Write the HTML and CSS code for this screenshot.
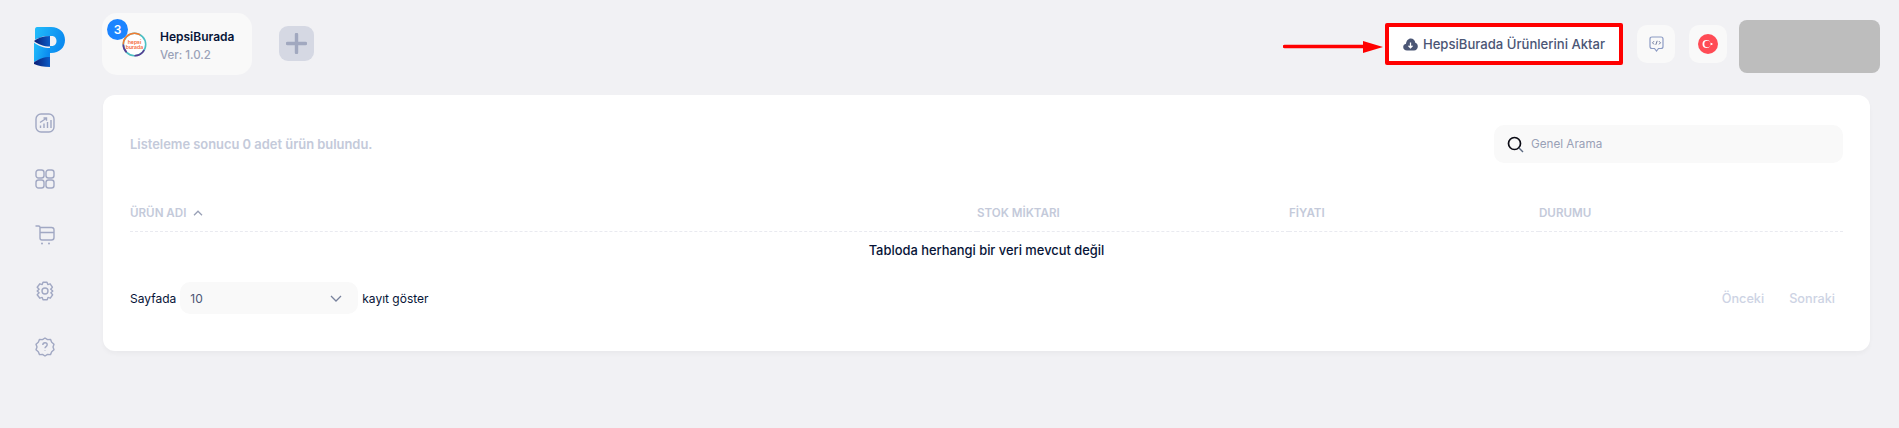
FILE: index.html
```html
<!DOCTYPE html>
<html lang="en">
<head>
  <meta charset="UTF-8">
  <meta name="viewport" content="width=device-width, initial-scale=1.0">
  <title>HepsiBurada Ürünleri</title>
  <link rel="stylesheet" href="styles.css">
</head>
<body>
  <div class="page">
    <!-- Sidebar -->
    <aside class="sidebar">
      <svg class="logo" width="31" height="40" viewBox="0 0 31 40">
        <defs>
          <linearGradient id="logoBlue" x1="0" y1="0" x2="1" y2="0.3">
            <stop offset="0" stop-color="#22bdfb"/>
            <stop offset="1" stop-color="#0b8bf0"/>
          </linearGradient>
          <linearGradient id="logoDark" x1="0" y1="0" x2="1" y2="0">
            <stop offset="0" stop-color="#0a1c74"/>
            <stop offset="1" stop-color="#0a5cc8"/>
          </linearGradient>
        </defs>
        <path d="M3 0H17C25.500 0 31 5.500 31 13C31 20.500 25.500 26 17 26H16V19H18C20.800 19 22.500 16.800 22.500 14C22.500 11.200 20.800 9 18 9H16C10 9 4 10.500 1 13V2.500C1 1 1.800 0 3 0Z" fill="url(#logoBlue)"/>
        <path d="M0 14C4 10.800 10 9 16 9V19.500C10 19.500 4 17.500 0 14Z" fill="url(#logoDark)"/>
        <path d="M0 15.500C4 19 10 21 16 21V31C10 31 4 32.500 0 35Z" fill="url(#logoBlue)"/>
        <path d="M0 35.500C4 32 10 30 16 30V40C10 40 4 39 0 37Z" fill="url(#logoDark)"/>
      </svg>
      <nav class="side-nav">
        <a class="side-item">
          <svg width="20" height="20" viewBox="0 0 20 20"><rect x="1" y="1" width="18" height="18" rx="5"/><path d="M5.500 15v-2.500M9 15v-4.500M12.500 15V9M16 15V7M5 9.500l6-4M8.500 5h3v2.800"/></svg>
        </a>
        <a class="side-item">
          <svg width="20" height="20" viewBox="0 0 20 20"><rect x="1" y="1" width="8" height="8" rx="2.500"/><rect x="11" y="1" width="8" height="8" rx="2.500"/><rect x="1" y="11" width="8" height="8" rx="2.500"/><rect x="11" y="11" width="8" height="8" rx="2.500"/></svg>
        </a>
        <a class="side-item">
          <svg width="20" height="20" viewBox="0 0 20 20"><path d="M0.500 1H3.500C4.500 1 5 1.600 5 2.500V13C5 14.200 5.800 15 7 15H16.500C18 15 19 14 19 12.500V5C19 3.500 18 2.500 16.500 2.500H5M5 7.500H19"/><circle class="dot" cx="7" cy="18.500" r="1"/><circle class="dot" cx="14" cy="18.500" r="1"/></svg>
        </a>
        <a class="side-item">
          <svg width="20" height="20" viewBox="0 0 20 20"><path d="M8 1.200h4l.8 2.400 2.300-.8 2.300 3.400-1.700 2L17.800 10l-1.900 1.800 1.700 2-2.300 3.400-2.300-.8-.8 2.400H8l-.8-2.400-2.300.8-2.700-3.400 1.900-2L2.200 10l1.900-1.800-1.900-2 2.700-3.400 2.300.8z" stroke-linejoin="round"/><circle cx="10" cy="10" r="3"/></svg>
        </a>
        <a class="side-item">
          <svg width="20" height="20" viewBox="0 0 20 20"><path d="M10 1l2.500 1.600 3-.2 1.200 2.800 2.300 2-1 2.800 1 2.800-2.300 2-1.200 2.800-3-.2L10 19l-2.500-1.600-3 .2-1.200-2.800-2.300-2 1-2.800-1-2.800 2.300-2 1.200-2.800 3 .2z" stroke-linejoin="round"/><path d="M7.800 8c0-1.400 1-2.200 2.200-2.200s2.200.9 2.200 2c0 1.800-2.200 1.800-2.200 3.500M10 13.500v.6"/></svg>
        </a>
      </nav>
    </aside>

    <div class="main">
      <!-- Top bar -->
      <header class="topbar">
        <div class="tab-card">
          <span class="tab-badge">3</span>
          <svg class="tab-logo" width="25" height="25" viewBox="0 0 25 25">
            <circle cx="12.500" cy="12.500" r="11.200" fill="#fff" stroke="#4bbfc4" stroke-width="1.600"/>
            <path d="M1.300 12.500A11.200 11.200 0 0 1 18.100 2.800" fill="none" stroke="#f47b30" stroke-width="1.600"/>
            <path d="M22.200 18.100A11.200 11.200 0 0 1 12.500 23.700" fill="none" stroke="#5b3a92" stroke-width="1.600"/>
            <path d="M4.600 20.400A11.200 11.200 0 0 1 1.300 12.500" fill="none" stroke="#5b3a92" stroke-width="1.600"/>
            <text class="tab-logo-text" x="12.500" y="11.500">hepsi</text>
            <text class="tab-logo-text" x="12.500" y="17">burada</text>
          </svg>
          <div class="tab-info">
            <div class="tab-name">HepsiBurada</div>
            <div class="tab-version">Ver: 1.0.2</div>
          </div>
        </div>
        <button class="add-btn">
          <svg width="21" height="21" viewBox="0 0 21 21"><path d="M10.500 1.500v18M1.500 10.500h18" stroke="#a1a8bf" stroke-width="3.400" stroke-linecap="round"/></svg>
        </button>

        <div class="topbar-right">
          <svg class="arrow" width="101" height="16" viewBox="0 0 101 16">
            <path d="M1.500 7.500H84" stroke="#ff0000" stroke-width="3.400" stroke-linecap="round"/>
            <path d="M80 2L100 8L80 14Z" fill="#ff0000"/>
          </svg>
          <button class="import-btn">
            <svg width="15" height="13" viewBox="0 0 15 13"><path d="M4 12.500C1.800 12.500 0.200 11 0.200 9C0.200 7.200 1.400 6 3 5.700C3.300 2.800 5.200 0.500 7.800 0.500C10.200 0.500 12 2.300 12.300 4.800C13.800 5.200 14.800 6.500 14.800 8.500C14.800 10.800 13.300 12.500 11 12.500Z" fill="#4b5675"/><path d="M7.500 4.500v5M5.500 7.800l2 2 2-2" fill="none" stroke="#fff" stroke-width="1.300"/></svg>
            <span>HepsiBurada Ürünlerini Aktar</span>
          </button>
          <button class="icon-btn code-btn">
            <svg width="15" height="17" viewBox="0 0 15 17"><path d="M3 1H12C13.300 1 14 1.700 14 3V10.500C14 11.800 13.300 12.500 12 12.500H9.500L7.500 15L5.500 12.500H3C1.700 12.500 1 11.800 1 10.500V3C1 1.700 1.700 1 3 1Z" fill="none" stroke="#8c9bc4" stroke-width="1.200"/><path d="M5 5.200L3.500 6.800L5 8.400M10 5.200L11.500 6.800L10 8.400M8.200 4.800L6.800 8.800" fill="none" stroke="#5d6b92" stroke-width="0.900"/></svg>
          </button>
          <button class="icon-btn flag-btn">
            <svg width="20" height="20" viewBox="0 0 20 20"><circle cx="10" cy="10" r="10" fill="#ff4b55"/><circle cx="8.500" cy="10" r="4" fill="#fff"/><circle cx="9.500" cy="10" r="3.200" fill="#ff4b55"/><circle cx="13.500" cy="10" r="1.100" fill="#fff"/></svg>
          </button>
          <div class="user-box"></div>
        </div>
      </header>

      <!-- Products -->
      <section class="card">
        <div class="card-head">
          <div class="result-text">Listeleme sonucu 0 adet ürün bulundu.</div>
          <label class="search">
            <svg width="17" height="17" viewBox="0 0 17 17"><circle cx="7.500" cy="7.500" r="6" fill="none" stroke="#0b0b14" stroke-width="1.700"/><path d="M12 12l4 4" stroke="#5d6b82" stroke-width="1.400"/></svg>
            <span>Genel Arama</span>
          </label>
        </div>

        <table class="product-table">
          <thead>
            <tr>
              <th class="col-name">
                ÜRÜN ADI
                <svg class="sort-icon" width="10" height="6" viewBox="0 0 10 6"><path d="M1 5.200L5 1.200L9 5.200" fill="none" stroke="#99a1b7" stroke-width="1.300"/></svg>
              </th>
              <th class="col-stock">STOK MİKTARI</th>
              <th class="col-price">FİYATI</th>
              <th>DURUMU</th>
            </tr>
          </thead>
          <tbody>
            <tr>
              <td colspan="4">Tabloda herhangi bir veri mevcut değil</td>
            </tr>
          </tbody>
        </table>

        <div class="card-foot">
          <div class="page-size">
            <span>Sayfada</span>
            <div class="select">
              <span>10</span>
              <svg width="12" height="7" viewBox="0 0 12 7"><path d="M1 1L6 6L11 1" fill="none" stroke="#78829d" stroke-width="1.300"/></svg>
            </div>
            <span>kayıt göster</span>
          </div>
          <div class="pager">
            <a>Önceki</a>
            <a>Sonraki</a>
          </div>
        </div>
      </section>
    </div>
  </div>
</body>
</html>
```

FILE: styles.css
```css
html, body {
  height: 100%;
  margin: 0;
  padding: 0;
}
body {
  background: #f1f1f4;
  color: #071437;
  font-family: 'Inter', 'Liberation Sans', sans-serif;
  font-size: 13px;
  overflow: hidden;
}
button {
  border: 0;
  padding: 0;
  font-family: inherit;
  cursor: pointer;
}

.page {
  display: flex;
  min-height: 100%;
}

/* sidebar */
.sidebar {
  width: 103px;
  flex: none;
  display: flex;
  flex-direction: column;
  align-items: center;
  padding: 27px 14px 0 0;
  box-sizing: border-box;
}
.logo {
  display: block;
  margin-left: 10px;
}
.side-nav {
  display: flex;
  flex-direction: column;
  gap: 36px;
  margin-top: 46px;
}
.side-item {
  display: block;
  height: 20px;
}
.side-item svg {
  display: block;
  fill: none;
  stroke: #a1a8c3;
  stroke-width: 1.4;
}
.side-item .dot {
  fill: #a1a8c3;
  stroke: none;
}

/* top bar */
.main {
  flex: 1;
  min-width: 0;
  padding: 13px 19px 0 0;
}
.topbar {
  display: flex;
  align-items: flex-start;
  height: 82px;
}
.tab-card {
  position: relative;
  width: 150px;
  height: 62px;
  margin-left: -1px;
  box-sizing: border-box;
  padding: 18px 0 0 20px;
  display: flex;
  gap: 13px;
  background: #f9f9f9;
  border-radius: 15px;
}
.tab-badge {
  position: absolute;
  left: 5px;
  top: 6px;
  width: 21px;
  height: 21px;
  border-radius: 50%;
  background: #1b84ff;
  color: #fff;
  font-size: 12px;
  font-weight: 600;
  line-height: 21px;
  text-align: center;
}
.tab-logo {
  flex: none;
  margin-top: 1px;
}
.tab-logo-text {
  fill: #f4693a;
  font-family: 'Inter', sans-serif;
  font-size: 5.2px;
  font-weight: 600;
  text-anchor: middle;
}
.tab-info {
  margin-top: -3px;
  white-space: nowrap;
}
.tab-name {
  font-size: 12px;
  font-weight: 600;
  line-height: 18px;
}
.tab-version {
  margin-top: 1px;
  color: #99a1b7;
  font-size: 11.500px;
  font-weight: 500;
  line-height: 16px;
}
.add-btn {
  width: 35px;
  height: 35px;
  margin: 13px 0 0 27px;
  display: flex;
  align-items: center;
  justify-content: center;
  background: #d5d8e3;
  border-radius: 9px;
}

.topbar-right {
  margin-left: auto;
  margin-top: 7px;
  display: flex;
  align-items: flex-start;
}
.arrow {
  margin: 19px 1px 0 0;
}
.import-btn {
  width: 238px;
  height: 42px;
  margin-top: 3px;
  box-sizing: border-box;
  border: 4px solid #ff0000;
  border-radius: 2px;
  background: #fff;
  color: #4b5675;
  font-size: 13.100px;
  font-weight: 500;
  display: flex;
  align-items: center;
  justify-content: center;
  gap: 5px;
}
.icon-btn {
  width: 38px;
  height: 38px;
  margin-top: 5px;
  display: flex;
  align-items: center;
  justify-content: center;
  background: #f9f9f9;
  border-radius: 10px;
}
.code-btn {
  margin-left: 14px;
}
.flag-btn {
  margin-left: 14px;
}
.user-box {
  width: 141px;
  height: 53px;
  margin-left: 12px;
  background: #bdbdbd;
  border-radius: 8px;
}

/* card */
.card {
  margin-right: 10px;
  height: 256px;
  box-sizing: border-box;
  padding: 30px 27px 0;
  background: #fff;
  border-radius: 12px;
  box-shadow: 0 3px 4px rgba(0, 0, 0, 0.03);
}
.card-head {
  display: flex;
  align-items: center;
  justify-content: space-between;
}
.result-text {
  color: #c4cada;
  font-size: 12.900px;
  font-weight: 600;
}
.search {
  width: 349px;
  height: 38px;
  box-sizing: border-box;
  padding-left: 13px;
  display: flex;
  align-items: center;
  gap: 7px;
  background: #f9f9f9;
  border-radius: 10px;
  color: #99a1b7;
  font-size: 11.700px;
}

.product-table {
  width: 100%;
  margin-top: 32px;
  border-collapse: collapse;
  table-layout: fixed;
}
.product-table th {
  height: 36px;
  padding: 0;
  border-bottom: 1px dashed #e9eaf0;
  color: #c4cada;
  font-size: 11.600px;
  font-weight: 600;
  text-align: left;
  white-space: nowrap;
}
.col-name {
  width: 847px;
}
.col-stock {
  width: 312px;
}
.col-price {
  width: 250px;
}
.sort-icon {
  margin-left: 4px;
  vertical-align: 1px;
}
.product-table td {
  height: 36px;
  padding: 0;
  font-size: 12.900px;
  font-weight: 500;
  text-align: center;
}

.card-foot {
  margin-top: 14px;
  display: flex;
  align-items: center;
  justify-content: space-between;
}
.page-size {
  display: flex;
  align-items: center;
  gap: 4px;
  font-size: 12px;
  color: #071437;
}
.select {
  width: 178px;
  height: 32px;
  box-sizing: border-box;
  padding: 0 16px 0 10px;
  display: flex;
  align-items: center;
  justify-content: space-between;
  background: #f9f9f9;
  border-radius: 10px;
  color: #4b5675;
  font-size: 12px;
}
.pager {
  display: flex;
  gap: 25px;
  padding-right: 8px;
  color: #cdd3e4;
  font-size: 12.700px;
  font-weight: 500;
}
```
